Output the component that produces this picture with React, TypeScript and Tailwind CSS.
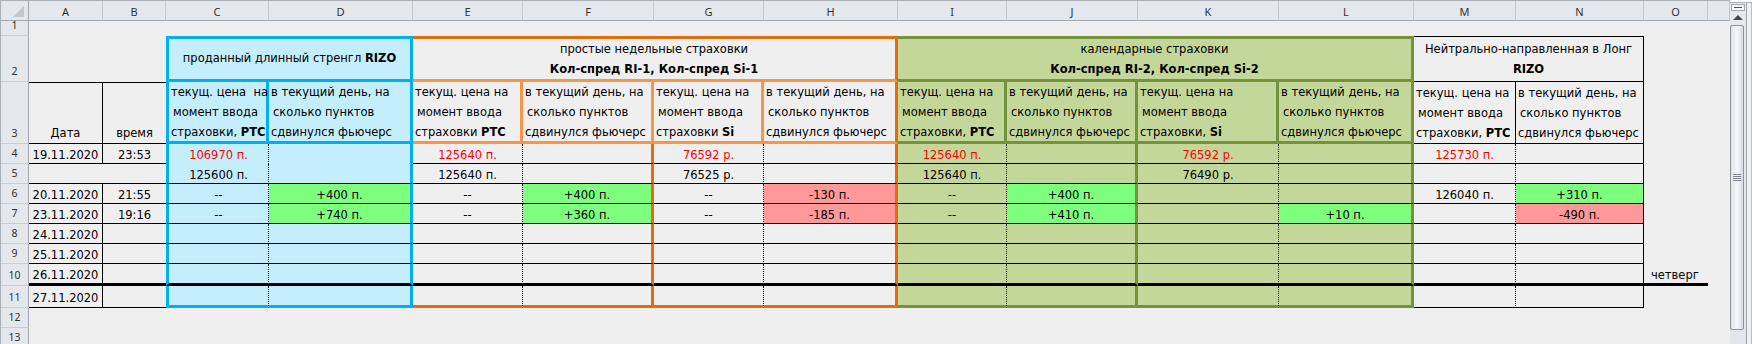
import React from "react";

type V = { t: string; red?: boolean; fill?: "g" | "p" };

const COLS = ["A", "B", "C", "D", "E", "F", "G", "H", "I", "J", "K", "L", "M", "N", "O", "P"];

const DATA: Record<number, Record<string, V>> = {
  4: {
    A: { t: "19.11.2020" },
    B: { t: "23:53" },
    C: { t: "106970 п.", red: true },
    E: { t: "125640 п.", red: true },
    G: { t: "76592 р.", red: true },
    I: { t: "125640 п.", red: true },
    K: { t: "76592 р.", red: true },
    M: { t: "125730 п.", red: true },
  },
  5: {
    C: { t: "125600 п." },
    E: { t: "125640 п." },
    G: { t: "76525 р." },
    I: { t: "125640 п." },
    K: { t: "76490 р." },
  },
  6: {
    A: { t: "20.11.2020" },
    B: { t: "21:55" },
    C: { t: "--" },
    D: { t: "+400 п.", fill: "g" },
    E: { t: "--" },
    F: { t: "+400 п.", fill: "g" },
    G: { t: "--" },
    H: { t: "-130 п.", fill: "p" },
    I: { t: "--" },
    J: { t: "+400 п.", fill: "g" },
    M: { t: "126040 п." },
    N: { t: "+310 п.", fill: "g" },
  },
  7: {
    A: { t: "23.11.2020" },
    B: { t: "19:16" },
    C: { t: "--" },
    D: { t: "+740 п.", fill: "g" },
    E: { t: "--" },
    F: { t: "+360 п.", fill: "g" },
    G: { t: "--" },
    H: { t: "-185 п.", fill: "p" },
    I: { t: "--" },
    J: { t: "+410 п.", fill: "g" },
    L: { t: "+10 п.", fill: "g" },
    N: { t: "-490 п.", fill: "p" },
  },
  8: { A: { t: "24.11.2020" } },
  9: { A: { t: "25.11.2020" } },
  10: { A: { t: "26.11.2020" }, O: { t: "четверг" } },
  11: { A: { t: "27.11.2020" } },
};

const DOT = "border-r border-r-black [border-right-style:dotted]!";

function dataCls(col: string, r: number, v?: V): string {
  const last = r === 11;
  const thick = r === 10;
  let bottom = thick ? "border-b-[3px] border-b-black" : "border-b border-b-black";
  let bg = "bg-[#efefef]";
  let side = "";
  switch (col) {
    case "A":
      side = r === 5 ? "" : "border-r border-r-black";
      break;
    case "B":
      break;
    case "C":
      bg = "bg-[#c5eefd]";
      side = "border-l-[3px] border-l-[#00b0f0] " + DOT;
      if (r === 4) bottom = "";
      if (last) bottom = "border-b-[3px] border-b-[#00b0f0]";
      break;
    case "D":
      bg = "bg-[#c5eefd]";
      side = "border-r-[3px] border-r-[#00b0f0]";
      if (r === 4) bottom = "";
      if (last) bottom = "border-b-[3px] border-b-[#00b0f0]";
      break;
    case "E":
    case "G":
      side = DOT;
      if (last) bottom = "border-b-[3px] border-b-[#e46c0a]";
      break;
    case "F":
    case "H":
      side = "border-r-[3px] border-r-[#e46c0a]";
      if (last) bottom = "border-b-[3px] border-b-[#e46c0a]";
      break;
    case "I":
    case "K":
      bg = "bg-[#c4d79b]";
      side = DOT;
      if (last) bottom = "border-b-[3px] border-b-[#76933c]";
      break;
    case "J":
    case "L":
      bg = "bg-[#c4d79b]";
      side = "border-r-[3px] border-r-[#76933c]";
      if (last) bottom = "border-b-[3px] border-b-[#76933c]";
      break;
    case "M":
      side = DOT;
      break;
    case "N":
      side = "border-r border-r-black";
      break;
    case "O":
      bottom = thick ? "border-b-[3px] border-b-black" : "";
      break;
    case "P":
      bottom = "";
      break;
  }
  if (v?.fill === "g") bg = "bg-[#7dff7d]";
  if (v?.fill === "p") bg = "bg-[#ff9999]";
  const align = col === "O" ? "justify-start pl-[7px]" : "justify-center";
  const color = v?.red ? "text-[#ff0000]" : "text-black";
  return [
    "flex items-center pt-[2px] text-[11.5px] leading-[18px] whitespace-nowrap",
    align,
    color,
    bg,
    side,
    bottom,
  ].join(" ");
}

const ROWHDR =
  "flex items-end justify-center pb-[3px] bg-[#e4e7eb] border-r border-r-[#a0a7b0] border-b border-b-[#c9cdd3] font-['Noto_Sans',sans-serif] text-[10.5px] leading-[13px] text-[#333]";

const EMPTY = "bg-[#efefef]";

function Three({ a, b, c }: { a: React.ReactNode; b: React.ReactNode; c: React.ReactNode }) {
  return (
    <div className="flex flex-col items-start pl-[2px] leading-[20px] text-[11.5px] whitespace-pre">
      <span>{a}</span>
      <span className="pl-[2px]">{b}</span>
      <span>{c}</span>
    </div>
  );
}

function Scrollbar() {
  return (
    <div className="w-[22px] h-[344px] flex flex-col bg-[#f0f0f0]">
      <div className="h-[3px] bg-[#fbfbfb] border-b border-b-[#aab1ba]" />
      <div className="flex flex-1">
        <div className="w-[16px] flex flex-col bg-[#e6e9ee]">
          <div className="h-[7px] mt-[1px] mx-[1px] border border-[#a3aab3] bg-[#f4f6f9] flex items-center justify-center">
            <div className="w-[8px] h-[1px] bg-[#555]" />
          </div>
          <div className="h-[14px] flex items-center justify-center">
            <svg width="10" height="6" viewBox="0 0 10 6">
              <polygon points="5,0 10,5 0,5" fill="#4a4a4a" />
            </svg>
          </div>
          <div className="h-[305px] mr-[2px] border border-[#8d949e] rounded-[2px] bg-gradient-to-r from-[#dfe4ec] via-[#f6f8fb] to-[#d5dbe4] flex flex-col items-center justify-center gap-[1px]">
            <div className="w-[8px] h-[1px] bg-[#7b828b]" />
            <div className="w-[8px] h-[1px] bg-[#7b828b]" />
            <div className="w-[8px] h-[1px] bg-[#7b828b]" />
            <div className="w-[8px] h-[1px] bg-[#7b828b]" />
          </div>
          <div className="flex-1 bg-[#e3e7ed]" />
        </div>
        <div className="w-[6px] border-l border-l-[#9ca3ab] border-r border-r-[#b9bec5] bg-[#f0f0f0]" />
      </div>
    </div>
  );
}

export default function App() {
  const dataRows = [4, 5, 6, 7, 8, 9, 10, 11];
  return (
    <div className="w-[1752px] h-[344px] overflow-hidden flex bg-[#efefef] font-['DejaVu_Sans',sans-serif] text-black">
      <div className="w-[1730px] flex flex-col">
        <div className="h-[3px] bg-[#fbfbfb] border-b border-b-[#aab1ba] border-l border-l-[#a9b0b9]" />
        <div className="grid border-l border-l-[#a9b0b9] grid-cols-[28px_74px_63px_103px_144px_110px_131px_110px_134px_109px_131px_141px_135px_102px_128px_64px_22px] grid-rows-[20px_15px_46px_62px_20px_20px_20px_20px_20px_20px_22px_22px_20px_20px]">
          {/* column header row */}
          <div className="bg-[#e4e7eb] border-r border-r-[#a0a7b0] border-b border-b-[#a0a7b0] flex items-end justify-end pr-[4px] pb-[3px]">
            <svg width="11" height="11" viewBox="0 0 11 11">
              <polygon points="11,0 11,11 0,11" fill="#c3c8cf" />
            </svg>
          </div>
          {COLS.map((c) => (
            <div
              key={c}
              className="bg-[#e4e7eb] border-r border-r-[#c5cad1] border-b border-b-[#a0a7b0] flex items-center justify-center pt-[3px] font-['Noto_Sans',sans-serif] text-[11px] text-[#333]"
            >
              {c === "P" ? "" : c}
            </div>
          ))}

          {/* row 1 */}
          <div className={ROWHDR}>1</div>
          <div className={EMPTY + " col-span-16"} />

          {/* row 2 */}
          <div className={ROWHDR}>2</div>
          <div className={EMPTY + " col-span-2"} />
          <div className="col-span-2 bg-[#c5eefd] border-[3px] border-[#00b0f0] flex items-center justify-center text-[11.5px] whitespace-nowrap">
            <span>
              проданный длинный стренгл <b>RIZO</b>
            </span>
          </div>
          <div className="col-span-4 bg-[#efefef] border-t-[3px] border-t-[#e46c0a] border-r-[3px] border-r-[#e46c0a] border-b-[3px] border-b-[#f79646] flex flex-col items-center justify-center text-[11.5px] leading-[20px] whitespace-nowrap">
            <span>простые недельные страховки</span>
            <b>Кол-спред RI-1, Кол-спред Si-1</b>
          </div>
          <div className="col-span-4 bg-[#c4d79b] border-t-[3px] border-t-[#76933c] border-r-[3px] border-r-[#76933c] border-b-[3px] border-b-[#76933c] flex flex-col items-center justify-center text-[11.5px] leading-[20px] whitespace-nowrap">
            <span>календарные страховки</span>
            <b>Кол-спред RI-2, Кол-спред Si-2</b>
          </div>
          <div className="col-span-2 bg-[#efefef] border-t border-t-black border-r border-r-black border-b border-b-black flex flex-col items-center justify-center text-[11.5px] leading-[20px] whitespace-nowrap">
            <span>Нейтрально-направленная в Лонг</span>
            <b>RIZO</b>
          </div>
          <div className={EMPTY} />
          <div className={EMPTY} />

          {/* row 3 */}
          <div className={ROWHDR}>3</div>
          <div className="bg-[#efefef] border-t border-t-black border-r border-r-black border-b border-b-black flex items-end justify-center text-[11.5px] leading-[20px]">
            Дата
          </div>
          <div className="bg-[#efefef] border-t border-t-black border-b border-b-black flex items-end justify-center text-[11.5px] leading-[20px]">
            время
          </div>
          <div className="bg-[#c5eefd] border-l-[3px] border-l-[#00b0f0] border-r-[3px] border-r-[#00b0f0] border-b-[3px] border-b-[#00b0f0] flex items-center">
            <Three a="текущ. цена  на" b="момент ввода" c={<>страховки, <b>РТС</b></>} />
          </div>
          <div className="bg-[#c5eefd] border-r-[3px] border-r-[#00b0f0] border-b-[3px] border-b-[#00b0f0] flex items-center">
            <Three a="в текущий день, на" b="сколько пунктов" c="сдвинулся фьючерс" />
          </div>
          <div className="bg-[#efefef] border-r-[3px] border-r-[#f79646] border-b-[3px] border-b-[#f79646] flex items-center">
            <Three a="текущ. цена на" b="момент ввода" c={<>страховки <b>РТС</b></>} />
          </div>
          <div className="bg-[#efefef] border-r-[3px] border-r-[#f79646] border-b-[3px] border-b-[#f79646] flex items-center">
            <Three a="в текущий день, на" b="сколько пунктов" c="сдвинулся фьючерс" />
          </div>
          <div className="bg-[#efefef] border-r-[3px] border-r-[#f79646] border-b-[3px] border-b-[#f79646] flex items-center">
            <Three a="текущ. цена на" b="момент ввода" c={<>страховки <b>Si</b></>} />
          </div>
          <div className="bg-[#efefef] border-r-[3px] border-r-[#e46c0a] border-b-[3px] border-b-[#f79646] flex items-center">
            <Three a="в текущий день, на" b="сколько пунктов" c="сдвинулся фьючерс" />
          </div>
          <div className="bg-[#c4d79b] border-r-[3px] border-r-[#76933c] border-b-[3px] border-b-[#76933c] flex items-center">
            <Three a="текущ. цена на" b="момент ввода" c={<>страховки, <b>РТС</b></>} />
          </div>
          <div className="bg-[#c4d79b] border-r-[3px] border-r-[#76933c] border-b-[3px] border-b-[#76933c] flex items-center">
            <Three a="в текущий день, на" b="сколько пунктов" c="сдвинулся фьючерс" />
          </div>
          <div className="bg-[#c4d79b] border-r-[3px] border-r-[#76933c] border-b-[3px] border-b-[#76933c] flex items-center">
            <Three a="текущ. цена на" b="момент ввода" c={<>страховки, <b>Si</b></>} />
          </div>
          <div className="bg-[#c4d79b] border-r-[3px] border-r-[#76933c] border-b-[3px] border-b-[#76933c] flex items-center">
            <Three a="в текущий день, на" b="сколько пунктов" c="сдвинулся фьючерс" />
          </div>
          <div className="bg-[#efefef] border-r border-r-black border-b border-b-black flex items-center">
            <Three a="текущ. цена на" b="момент ввода" c={<>страховки, <b>РТС</b></>} />
          </div>
          <div className="bg-[#efefef] border-r border-r-black border-b border-b-black flex items-center">
            <Three a="в текущий день, на" b="сколько пунктов" c="сдвинулся фьючерс" />
          </div>
          <div className={EMPTY} />
          <div className={EMPTY} />

          {/* data rows */}
          {dataRows.map((r) => (
            <React.Fragment key={r}>
              <div className={ROWHDR}>{r}</div>
              {COLS.map((c) => {
                const v = DATA[r]?.[c];
                return (
                  <div key={c} className={dataCls(c, r, v)}>
                    {v?.t}
                  </div>
                );
              })}
            </React.Fragment>
          ))}

          {/* rows 12, 13 */}
          <div className={ROWHDR}>12</div>
          <div className={EMPTY + " col-span-16"} />
          <div className={ROWHDR}>13</div>
          <div className={EMPTY + " col-span-16"} />
        </div>
      </div>
      <Scrollbar />
    </div>
  );
}
